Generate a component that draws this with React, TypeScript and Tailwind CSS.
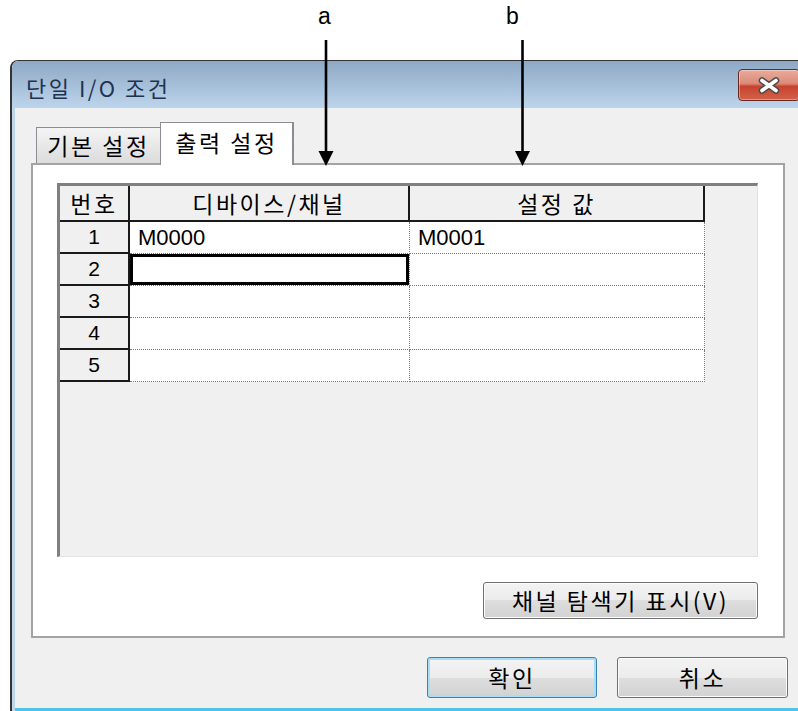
import type { ReactNode } from "react";

const rows = [
  { no: "1", device: "M0000", value: "M0001" },
  { no: "2", device: "", value: "", selected: true },
  { no: "3", device: "", value: "" },
  { no: "4", device: "", value: "" },
  { no: "5", device: "", value: "" },
];

const WinButton = ({ children, width, height, primary }: { children: ReactNode; width: string; height: string; primary?: boolean }) => {
  return (
    <button
      className={
        primary
          ? `${width} ${height} rounded-[3px] border border-[#3c7fb1] shadow-[inset_0_0_0_2px_#a6def8] bg-[linear-gradient(to_bottom,#f3f3f3_0%,#ececec_50%,#dedede_50%,#d2d2d2_100%)] flex items-center justify-center font-['Noto_Sans_CJK_KR',sans-serif] tracking-[2.5px] text-[23px] text-black`
          : `${width} ${height} rounded-[3px] border border-[#707070] shadow-[inset_0_0_0_1px_#fbfbfb] bg-[linear-gradient(to_bottom,#f3f3f3_0%,#ececec_50%,#dedede_50%,#d2d2d2_100%)] flex items-center justify-center font-['Noto_Sans_CJK_KR',sans-serif] tracking-[2.5px] text-[23px] text-black`
      }
    >
      {children}
    </button>
  );
};

const App = () => {
  return (
    <div className="relative w-[798px] h-[711px] overflow-hidden bg-white">
      {/* dialog window */}
      <div className="pt-[60px] pl-[10px]">
        <div className="w-[800px] h-[660px] rounded-t-[8px] border-l-2 border-t border-[#343434] flex flex-col overflow-hidden">
          <div className="h-[47px] shrink-0 flex justify-between bg-linear-to-b from-[#8ea9c5] to-[#bdd5ec]">
            <div className="pl-[14px] pt-[14px] leading-[24px] text-[22px] tracking-[2.5px] text-[#1d3350] font-['Noto_Sans_CJK_KR',sans-serif]">
              단일 I/O 조건
            </div>
            <div className="pt-[8px] pr-[10px]">
              <div className="w-[62px] h-[32px] rounded-[4px] border border-[#6b2820] shadow-[inset_0_0_0_1px_rgba(255,255,255,0.35)] bg-[linear-gradient(to_bottom,#e8ab9d_0%,#dc8a78_45%,#c6442e_55%,#d2624a_100%)] flex items-center justify-center">
                <svg width="24" height="17" viewBox="0 0 24 17">
                  <path d="M5 3.5 L19 13.5 M19 3.5 L5 13.5" stroke="#4b4b4b" strokeWidth="6.5" strokeLinecap="round" fill="none" />
                  <path d="M5 3.5 L19 13.5 M19 3.5 L5 13.5" stroke="#ffffff" strokeWidth="3.6" strokeLinecap="round" fill="none" />
                </svg>
              </div>
            </div>
          </div>

          <div className="flex-1 flex">
            <div className="w-[3px] bg-[#bfd5eb]" />
            <div className="flex-1 h-[603px] bg-[#f0f0f0] border-b-[3px] border-[#4cc4e6] pl-[16px] pt-[14px]">
              {/* tabs */}
              <div className="h-[41px] flex items-end pl-[5px]">
                <div className="w-[124px] h-[36px] border-t border-l border-[#8a8d94] bg-linear-to-b from-[#f4f4f4] to-[#dcdcdc] flex items-center justify-center text-[23px] tracking-[2.5px] text-black font-['Noto_Sans_CJK_KR',sans-serif]">
                  기본 설정
                </div>
                <div className="relative z-10 w-[134px] h-[43px] -mb-[2px] border-t border-l border-r-2 border-[#8a8d94] bg-white flex items-center justify-center pb-[4px] text-[23px] tracking-[2.5px] text-black font-['Noto_Sans_CJK_KR',sans-serif]">
                  출력 설정
                </div>
              </div>

              {/* tab panel */}
              <div className="w-[754px] h-[475px] border-2 border-[#a3a3a3] bg-white pt-[18px] pl-[24px] flex flex-col">
                <div className="w-[701px] h-[374px] bg-[#f0f0f0] border-t-[3px] border-l-[3px] border-r border-b border-t-[#7f7f7f] border-l-[#7f7f7f] border-r-[#e2e2e2] border-b-[#e2e2e2]">
                  <div className="grid grid-cols-[70px_280px_295px] w-[645px]">
                    <div className="h-[36px] border-r-2 border-b-2 border-[#1a1a1a] flex items-center justify-center text-[23px] tracking-[2.5px] font-['Noto_Sans_CJK_KR',sans-serif]">
                      번호
                    </div>
                    <div className="h-[36px] border-r-2 border-b-2 border-[#1a1a1a] flex items-center justify-center text-[23px] tracking-[2.5px] font-['Noto_Sans_CJK_KR',sans-serif]">
                      디바이스/채널
                    </div>
                    <div className="h-[36px] border-r-2 border-b-2 border-[#1a1a1a] flex items-center justify-center text-[23px] tracking-[2.5px] font-['Noto_Sans_CJK_KR',sans-serif]">
                      설정 값
                    </div>

                    {rows.map((r) => (
                      <div key={r.no} className="contents">
                        <div className="h-[32px] border-r-2 border-b-2 border-[#1a1a1a] flex items-center justify-center text-[21px] font-['Liberation_Sans',sans-serif]">
                          {r.no}
                        </div>
                        <div className="h-[32px] bg-white border-r border-b border-dotted border-[#7a7a7a] flex items-center text-[22px] font-['Liberation_Sans',sans-serif]">
                          {r.selected ? (
                            <div className="w-full h-full border-[3px] border-black" />
                          ) : (
                            <span className="pl-[8px]">{r.device}</span>
                          )}
                        </div>
                        <div className="h-[32px] bg-white border-r border-b border-dotted border-[#7a7a7a] flex items-center text-[22px] font-['Liberation_Sans',sans-serif]">
                          <span className="pl-[8px]">{r.value}</span>
                        </div>
                      </div>
                    ))}
                  </div>
                </div>

                <div className="mt-[25px] w-[701px] flex justify-end">
                  <WinButton width="w-[275px]" height="h-[37px]">채널 탐색기 표시(V)</WinButton>
                </div>
              </div>

              {/* dialog buttons */}
              <div className="mt-[19px] pl-[396px] flex gap-[20px]">
                <WinButton width="w-[170px]" height="h-[41px]" primary>확인</WinButton>
                <WinButton width="w-[171px]" height="h-[41px]">취소</WinButton>
              </div>
            </div>
          </div>
        </div>
      </div>

      {/* annotation arrows */}
      <div className="absolute left-[318px] top-[5px] text-[23px] leading-none text-black font-['Liberation_Sans',sans-serif]">a</div>
      <div className="absolute left-[506px] top-[5px] text-[23px] leading-none text-black font-['Liberation_Sans',sans-serif]">b</div>
      <svg className="absolute left-0 top-0 pointer-events-none" width="798" height="711" viewBox="0 0 798 711">
        <line x1="326" y1="40" x2="326" y2="153" stroke="#000" strokeWidth="2.6" />
        <polygon points="318.5,151 333.5,151 326,166" fill="#000" />
        <line x1="522.5" y1="40" x2="522.5" y2="153" stroke="#000" strokeWidth="2.6" />
        <polygon points="515,151 530,151 522.5,166" fill="#000" />
      </svg>
    </div>
  );
};

export default App;
